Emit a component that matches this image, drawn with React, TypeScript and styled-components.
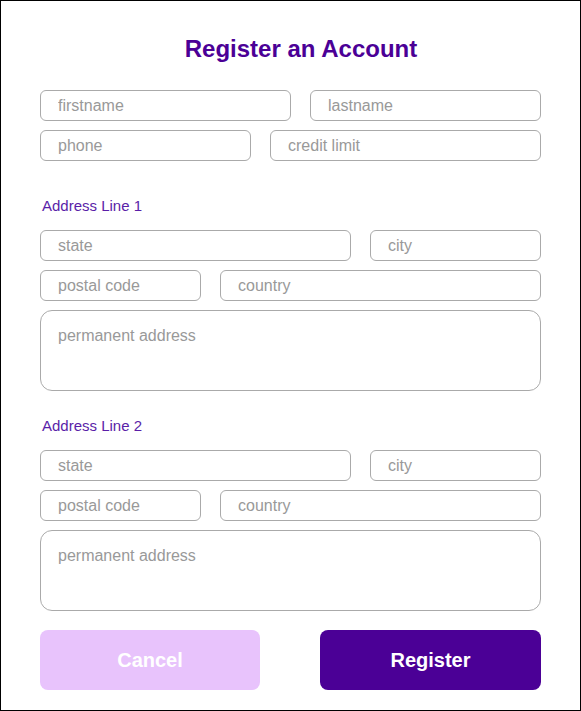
import React from "react";
import styled, { createGlobalStyle } from "styled-components";

const GlobalStyle = createGlobalStyle`
  html, body { margin: 0; padding: 0; background: #ffffff; }
  body { font-family: "Liberation Sans", Arial, sans-serif; }
  * { box-sizing: border-box; }
`;

const Frame = styled.div`
  width: 581px;
  height: 711px;
  border: 1px solid #000000;
  background: #ffffff;
  padding: 34px 39px 0 39px;
  display: flex;
  flex-direction: column;
`;

const Title = styled.h1`
  margin: 0 0 27px 0;
  padding-left: 21px;
  font-size: 24px;
  line-height: 28px;
  font-weight: 700;
  color: #4b0096;
  text-align: center;
`;

const Row = styled.div<{ $cols: string }>`
  display: grid;
  grid-template-columns: ${(p) => p.$cols};
  column-gap: 19px;
  margin-bottom: 9px;
`;

const Field = styled.input`
  height: 31px;
  width: 100%;
  border: 1px solid #aaaaaa;
  border-radius: 6px;
  padding: 0 17px;
  font-family: "Liberation Sans", Arial, sans-serif;
  font-size: 16px;
  color: #333;
  background: #fff;
  outline: none;
  &::placeholder { color: #999999; }
`;

const Area = styled.textarea`
  display: block;
  width: 100%;
  height: 81px;
  border: 1px solid #aaaaaa;
  border-radius: 12px;
  padding: 16px 17px;
  font-family: "Liberation Sans", Arial, sans-serif;
  font-size: 16px;
  line-height: 18px;
  resize: none;
  outline: none;
  &::placeholder { color: #999999; }
`;

const SectionLabel = styled.div<{ $top: number }>`
  margin: ${(p) => p.$top}px 0 15px 2px;
  font-size: 15px;
  line-height: 18px;
  color: #5a1ea8;
`;

const Buttons = styled.div`
  display: grid;
  grid-template-columns: 220px 221px;
  justify-content: space-between;
  margin-top: 19px;
`;

const Button = styled.button<{ $primary?: boolean }>`
  height: 60px;
  border: none;
  border-radius: 8px;
  background: ${(p) => (p.$primary ? "#4b0096" : "#e8c3fc")};
  color: #ffffff;
  font-family: "Liberation Sans", Arial, sans-serif;
  font-size: 20px;
  font-weight: 700;
  cursor: pointer;
`;

const AddressBlock = ({ title, top }: { title: string; top: number }) => (
  <>
    <SectionLabel $top={top}>{title}</SectionLabel>
    <Row $cols="311px 171px">
      <Field placeholder="state" />
      <Field placeholder="city" />
    </Row>
    <Row $cols="161px 321px">
      <Field placeholder="postal code" />
      <Field placeholder="country" />
    </Row>
    <Area placeholder="permanent address" />
  </>
);

export default function App() {
  return (
    <>
      <GlobalStyle />
      <Frame>
        <Title>Register an Account</Title>
        <Row $cols="251px 231px">
          <Field placeholder="firstname" />
          <Field placeholder="lastname" />
        </Row>
        <Row $cols="211px 271px">
          <Field placeholder="phone" />
          <Field placeholder="credit limit" />
        </Row>
        <AddressBlock title="Address Line 1" top={27} />
        <AddressBlock title="Address Line 2" top={26} />
        <Buttons>
          <Button>Cancel</Button>
          <Button $primary>Register</Button>
        </Buttons>
      </Frame>
    </>
  );
}
